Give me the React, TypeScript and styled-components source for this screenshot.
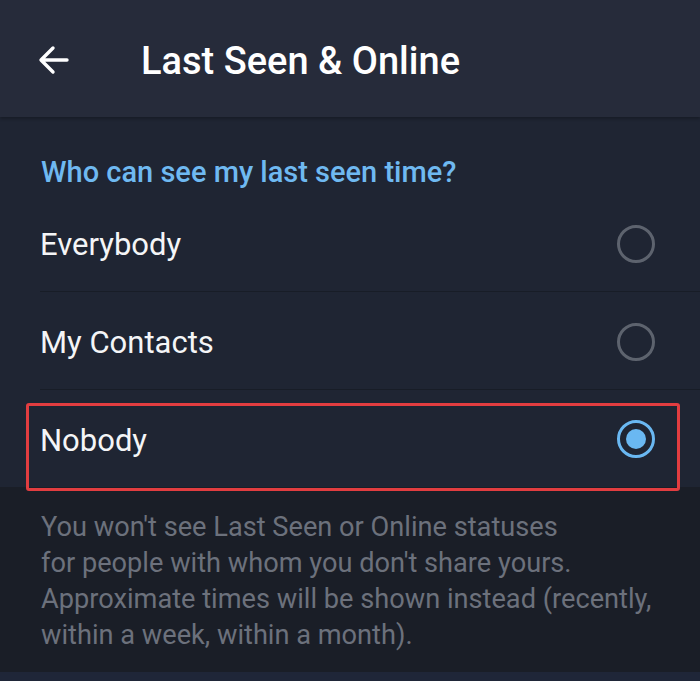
import styled, { createGlobalStyle } from 'styled-components'

const GlobalStyle = createGlobalStyle`
  html, body {
    margin: 0;
    padding: 0;
    background: #1a1e27;
  }
  body {
    font-family: Roboto, 'Noto Sans', sans-serif;
    -webkit-font-smoothing: antialiased;
  }
`

const options = [
  { id: 'everybody', label: 'Everybody' },
  { id: 'contacts', label: 'My Contacts' },
  { id: 'nobody', label: 'Nobody' },
]

export default function App() {
  const selected = 'nobody'

  return (
    <Screen>
      <GlobalStyle />
      <Header>
        <BackButton aria-label="Back">
          <svg width="34" height="34" viewBox="0 0 34 34" fill="none">
            <path
              d="M30 17H5M16 5L4 17l12 12"
              stroke="#fff"
              strokeWidth="3.4"
              strokeLinecap="round"
              strokeLinejoin="round"
            />
          </svg>
        </BackButton>
        <Title>Last Seen &amp; Online</Title>
      </Header>

      <Section>
        <SectionTitle>Who can see my last seen time?</SectionTitle>
        {options.map((opt, i) => (
          <Row key={opt.id} $last={i === options.length - 1}>
            <Label>{opt.label}</Label>
            <Radio $checked={opt.id === selected} />
            {opt.id === selected && <Highlight />}
          </Row>
        ))}
      </Section>

      <Info>
        You won't see Last Seen or Online statuses
        <br />
        for people with whom you don't share yours.
        <br />
        Approximate times will be shown instead (recently,
        <br />
        within a week, within a month).
      </Info>
      <BottomStrip />
    </Screen>
  )
}

const Screen = styled.div`
  width: 700px;
  height: 681px;
  display: flex;
  flex-direction: column;
  overflow: hidden;
  background: #1a1e27;
`

const Header = styled.header`
  height: 117px;
  flex-shrink: 0;
  display: flex;
  align-items: center;
  padding: 0 0 0 37px;
  box-sizing: border-box;
  background: #262b3a;
  box-shadow: 0 2px 3px rgba(0, 0, 0, 0.25);
  position: relative;
  z-index: 1;
`

const BackButton = styled.button`
  width: 34px;
  height: 34px;
  padding: 0;
  border: 0;
  background: none;
  display: flex;
  margin-top: 3px;
`

const Title = styled.h1`
  margin: 4px 0 0 70px;
  color: #ffffff;
  font-size: 38px;
  line-height: 44px;
  font-weight: 500;
`

const Section = styled.section`
  background: #1f2533;
  padding-top: 40px;
  display: flex;
  flex-direction: column;
`

const SectionTitle = styled.div`
  padding-left: 41px;
  height: 37px;
  line-height: 30px;
  color: #6fb9f1;
  font-size: 29px;
  font-weight: 500;
`

const Row = styled.div<{ $last: boolean }>`
  position: relative;
  height: 97px;
  margin-left: 40px;
  padding-right: 45px;
  display: flex;
  align-items: center;
  justify-content: space-between;
  border-bottom: ${(p) => (p.$last ? 'none' : '1px solid #181d27')};
`

const Label = styled.span`
  color: #f4f5f7;
  font-size: 31px;
  margin-top: 4px;
`

const Radio = styled.span<{ $checked: boolean }>`
  width: 38px;
  height: 38px;
  box-sizing: border-box;
  border-radius: 50%;
  border: 3px solid ${(p) => (p.$checked ? '#6ab8f2' : '#5d636e')};
  display: flex;
  align-items: center;
  justify-content: center;
  margin-top: ${(p) => (p.$checked ? '0' : '2px')};

  &::after {
    content: '';
    width: 20px;
    height: 20px;
    border-radius: 50%;
    background: #6ab8f2;
    display: ${(p) => (p.$checked ? 'block' : 'none')};
  }
`

const Highlight = styled.span`
  position: absolute;
  left: -14px;
  right: 20px;
  top: 13px;
  bottom: -4px;
  border: 3px solid #e23d40;
  border-radius: 3px;
  pointer-events: none;
`

const Info = styled.p`
  flex: 1;
  margin: 0;
  padding: 22px 0 0 41px;
  color: #6c717c;
  font-size: 27.2px;
  line-height: 36px;
  background: #1a1e27;
`

const BottomStrip = styled.div`
  height: 9px;
  background: #1f2638;
`
